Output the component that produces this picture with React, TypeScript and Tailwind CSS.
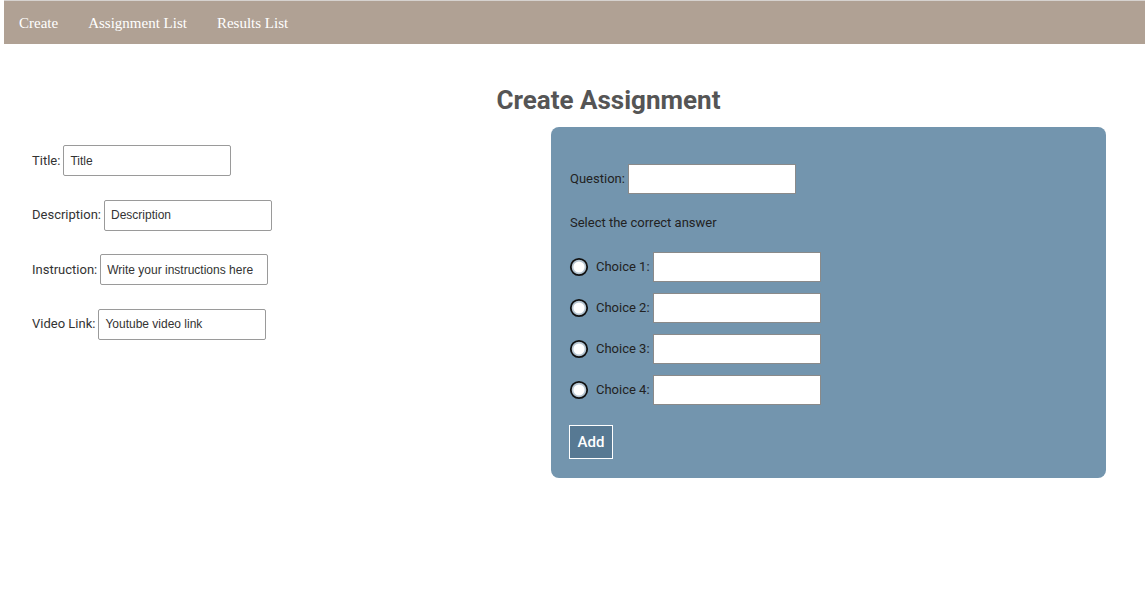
import React from "react"

const labelFont = { fontFamily: "Roboto, 'Liberation Sans', sans-serif" }

function Radio() {
  return (
    <svg width="20" height="20" viewBox="0 0 20 20" className="shrink-0">
      <circle cx="10" cy="10" r="8.2" fill="#b7c6d2" stroke="#111" strokeWidth="1.8" />
      <circle cx="10" cy="10" r="5.6" fill="#fff" />
    </svg>
  )
}

function Field({ label, placeholder }: { label: string; placeholder: string }) {
  return (
    <div className="flex items-center gap-[3px] h-[31px]">
      <span className="text-[13px] text-[#333]" style={labelFont}>
        {label}
      </span>
      <input
        placeholder={placeholder}
        className="w-[168px] h-[31px] px-[6px] border border-[#9a9a9a] rounded-[2px] bg-white text-[12px] text-[#333] placeholder:text-[#333] outline-none font-['Liberation_Sans',Arial,sans-serif]"
      />
    </div>
  )
}

export default function App() {
  const choices = ["Choice 1:", "Choice 2:", "Choice 3:", "Choice 4:"]

  return (
    <div className="min-h-screen bg-white pl-1">
      {/* Nav */}
      <nav className="h-[44px] bg-[#b0a194] border-t border-[#d6d2cf] flex items-center gap-[30px] pl-[15px] pt-px font-['Liberation_Serif',serif] text-[15px] text-white">
        <a>Create</a>
        <a>Assignment List</a>
        <a>Results List</a>
      </nav>

      <main>
        <div className="flex justify-center pl-[68px] pt-[40px]">
          <h1 className="text-[26px] font-bold text-[#555] leading-[32px]" style={labelFont}>
            Create Assignment
          </h1>
        </div>

        <div className="flex items-start mt-[11px]">
          {/* Left form */}
          <div className="w-[547px] pl-[28px] pt-[18px] flex flex-col gap-[23.5px]">
            <Field label="Title:" placeholder="Title" />
            <Field label="Description:" placeholder="Description" />
            <Field label="Instruction:" placeholder="Write your instructions here" />
            <Field label="Video Link:" placeholder="Youtube video link" />
          </div>

          {/* Question card */}
          <div className="w-[555px] h-[351px] bg-[#7395ae] rounded-[8px] pl-[19px] pt-[37px]" style={labelFont}>
            <div className="flex items-center gap-[3px] h-[30px]">
              <span className="text-[13px] text-[#222]">Question:</span>
              <input className="w-[168px] h-[30px] bg-white border border-[#8a8a8a] outline-none" />
            </div>

            <p className="text-[13px] text-[#222] mt-[21px] leading-[16px]">Select the correct answer</p>

            <div className="flex flex-col gap-[11px] mt-[21px]">
              {choices.map((c) => (
                <div key={c} className="flex items-center h-[30px] -ml-px">
                  <Radio />
                  <span className="ml-[7px] text-[13px] text-[#222]">{c}</span>
                  <input className="ml-[3px] w-[168px] h-[30px] bg-white border border-[#8a8a8a] outline-none" />
                </div>
              ))}
            </div>

            <button className="mt-[20px] -ml-px w-[44px] h-[34px] bg-[#577993] border border-white text-white text-[15px] font-medium">
              Add
            </button>
          </div>
        </div>
      </main>
    </div>
  )
}
